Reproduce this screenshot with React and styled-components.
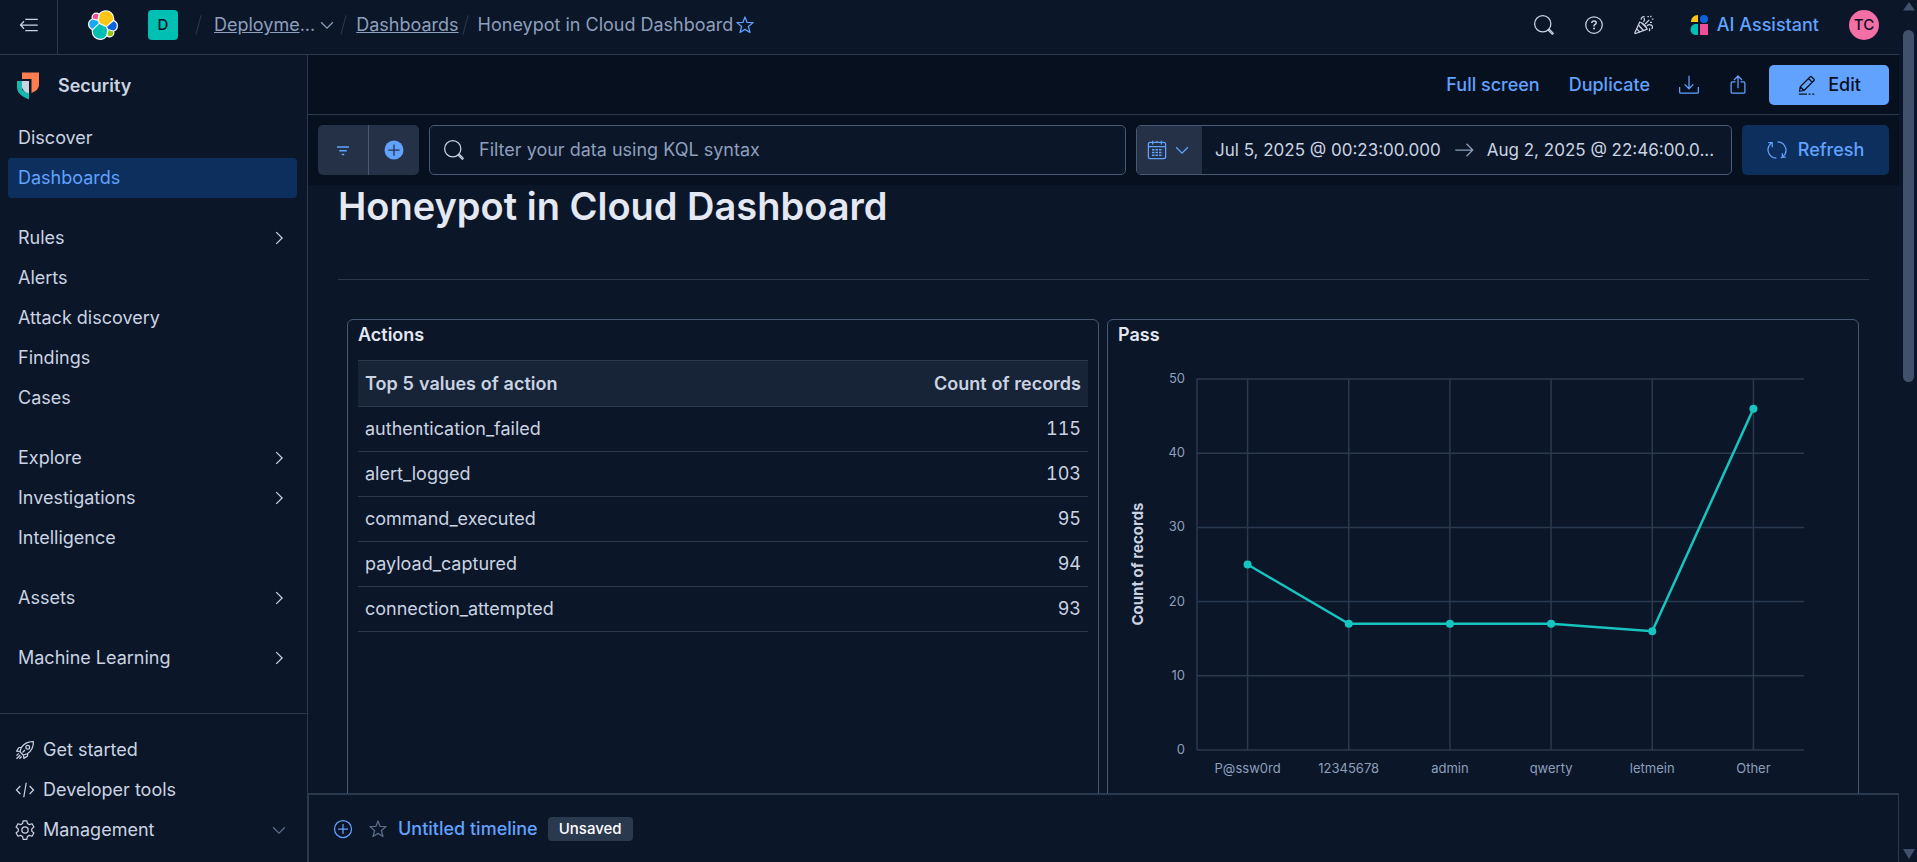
import React from "react";
import styled, { createGlobalStyle, ThemeProvider } from "styled-components";

const theme = {
  page: "#0b1628",
  sunken: "#07101f",
  raised: "#172336",
  control: "#243147",
  line: "#2b394f",
  outline: "#485975",
  text: "#cad3e2",
  title: "#e3e8f2",
  subdued: "#8e9fbc",
  faint: "#5a6d8c",
  primary: "#61a2ff",
  selected: "#0c2f5e",
  accent: "#16c5c0",
};

const GlobalStyle = createGlobalStyle`
  *, *::before, *::after { box-sizing: border-box; }
  html, body, #root { height: 100%; }
  body {
    margin: 0;
    background: ${theme.page};
    color: ${theme.text};
    font: 400 18px/24px Inter, "Liberation Sans", sans-serif;
  }
  button, input, select { font: inherit; color: inherit; }
  button { background: none; border: 0; padding: 0; cursor: pointer; }
  a { color: inherit; text-decoration: none; }
  ul, ol { list-style: none; margin: 0; padding: 0; }
  h1, h2 { margin: 0; }
  svg { display: block; flex: none; }
`;

/* ---------- icons ---------- */

const Glyph = ({ size = 20, children, ...rest }) => (
  <svg width={size} height={size} viewBox="0 0 16 16" fill="none" stroke="currentColor" strokeWidth="1" aria-hidden="true" {...rest}>
    {children}
  </svg>
);

const CollapseIcon = () => (
  <Glyph>
    <path d="M5 3.5h10M1.5 8H15M5 12.5h10M4 5 1.2 8 4 11" />
  </Glyph>
);
const ChevronDown = () => (
  <Glyph>
    <path d="m3.3 5.8 4.7 4.7 4.7-4.7" />
  </Glyph>
);
const ChevronRight = () => (
  <Glyph>
    <path d="m5.8 3.3 4.7 4.7-4.7 4.7" />
  </Glyph>
);
const StarIcon = () => (
  <Glyph>
    <path strokeLinejoin="round" d="m8 1.6 1.7 4.4 4.8.1-3.8 3.1 1.3 4.8L8 11.5 4 14l1.3-4.8-3.8-3.1 4.8-.1z" />
  </Glyph>
);
const SearchIcon = () => (
  <Glyph>
    <circle cx="7" cy="7" r="6.5" />
    <path d="m11.6 12.4.8-.8 2.9 2.9c.3.3-.5 1.1-.8.8z" />
  </Glyph>
);
const HelpIcon = () => (
  <Glyph>
    <circle cx="8" cy="8" r="6.6" />
    <path strokeWidth="1.2" d="M6.2 6.4c.1-1.1.8-1.7 1.8-1.7s1.8.6 1.8 1.5c0 1.3-1.8 1.3-1.8 2.6v.3" />
    <circle cx="8" cy="10.8" r=".8" fill="currentColor" stroke="none" />
  </Glyph>
);
const PartyIcon = () => (
  <Glyph>
    <path strokeLinejoin="round" d="M4.6 5.6c2.8.9 5 3 6 5.7L1.3 14.8c-.4.1-.7-.2-.6-.6z" />
    <path d="m3.7 8.2 4 4.4M2.4 11.3l2.3 2.5M6 6.3l4 4" />
    <path d="M7.6 5.5c.8-.9 1-2.200.4-3.200M5.600 3.700c.2-1.600 1.400-2.800 2.900-2.300M9 7.200l3.200-3.300M10.300 8.700c1-.9 2.300-1.200 3.500-.6 1.300.7 1.300 2.300.2 2.900M12.300 10.600c.5.800.4 1.700-.2 2.300" />
    <path d="M10.700 1.200h1.200M13.500.5v1.200M14.300 3.200h1.200M12.800 5.800h1.600" />
  </Glyph>
);
const DownloadIcon = () => (
  <Glyph>
    <path d="M8 .5v10M4.500 7.500 8 11l3.500-3.500M.5 9.500v4c0 .6.400 1 1 1h13c.6 0 1-.4 1-1v-4" />
  </Glyph>
);
const ShareIcon = () => (
  <Glyph>
    <path d="M8 10.500V1M4.800 4 8 .8 11.200 4M6 5.500H3.500c-.6 0-1 .4-1 1v7c0 .6.400 1 1 1h9c.6 0 1-.4 1-1v-7c0-.6-.4-1-1-1H10" />
  </Glyph>
);
const PencilIcon = () => (
  <Glyph>
    <path strokeLinejoin="round" d="m2.600 9.400 8-8c.3-.3.700-.3 1 0l2 2c.3.300.3.700 0 1l-8 8-3.600.600zM9.200 2.800l3 3M2.600 9.400l3 3M1.500 15.200H8M9.200 15.200h1.600M12.200 15.200h1.600" />
  </Glyph>
);
const FilterIcon = () => (
  <Glyph strokeWidth="1.200">
    <path d="M3.200 5.500h9.600M5 8.500h6M7 11.500h2" />
  </Glyph>
);
const AddFilledIcon = () => (
  <Glyph>
    <circle cx="8" cy="8" r="7.600" fill="currentColor" stroke="none" />
    <path stroke={theme.control} d="M8 3.500v9M3.500 8h9" />
  </Glyph>
);
const AddIcon = () => (
  <Glyph>
    <circle cx="8" cy="8" r="6.800" />
    <path d="M8 4v8M4 8h8" />
  </Glyph>
);
const CalendarIcon = () => (
  <Glyph>
    <rect x="1.100" y="1.900" width="13.800" height="13" rx="1.500" />
    <path d="M1 5.200h14M4.500.500v3M11.500.500v3M8 .500v1.500" />
    <path strokeWidth="1.200" strokeDasharray="2 .8" d="M4 7.800h8.500M4 10h8.500M4 12.200h8.500" />
  </Glyph>
);
const ArrowRightIcon = () => (
  <Glyph>
    <path d="M1 8h14M10 3l5 5-5 5" />
  </Glyph>
);
const RefreshIcon = () => (
  <Glyph>
    <path d="M8.500 1.500c6.500.300 9 8 4 12M11 14.300l1.700-.6h2.300M12.300 10.500v3.400M7.500 14.500C1 14.200-1.500 6.500 3.500 2.500M1 2.100h3.200v3.600" />
  </Glyph>
);
const RocketIcon = () => (
  <Glyph>
    <path strokeLinejoin="round" d="M14.700 1.300c-4-.2-7.300 1.300-9.700 4.800L4 9.500 6.500 12l3.400-1c3.500-2.400 5-5.700 4.800-9.700zM5.200 5.900 3.200 6 1.300 8.900l2.900.3M10.100 10.800 10 12.800 7.100 14.700l-.3-2.900" />
    <circle cx="10.200" cy="5.800" r="1.500" />
    <path d="M6 10l2-2M1.200 12.500l1.800-1.800M1.200 15l3-3M3.500 15l1.800-1.800" />
  </Glyph>
);
const CodeIcon = () => (
  <Glyph>
    <path d="M4.300 4.800 1.200 8l3.100 3.200M11.700 4.800 14.800 8l-3.100 3.200M9 2.200 7 13.800" />
  </Glyph>
);
const GearIcon = () => (
  <Glyph>
    <path strokeLinejoin="round" d="M6.500.6h3l.4 2.200 1.600.9 2.100-.7 1.500 2.600-1.700 1.500v1.800l1.700 1.500-1.500 2.600-2.100-.7-1.600.9-.4 2.200h-3l-.4-2.200-1.600-.9-2.100.7L.9 10.400l1.700-1.500V7.100L.9 5.600 2.400 3l2.100.7 1.600-.9z" />
    <circle cx="8" cy="8" r="2.500" />
  </Glyph>
);

const elasticShapes = [
  ["#FEC514", "M12.58 13.787l7.002 3.211 7.066-6.213a7.85 7.85 0 0 0 .152-1.557c0-4.287-3.464-7.767-7.732-7.767a7.707 7.707 0 0 0-6.366 3.36l-1.175 6.119z"],
  ["#00BFB3", "M5.333 21.214a7.89 7.89 0 0 0-.153 1.576c0 4.29 3.478 7.78 7.754 7.78a7.74 7.74 0 0 0 6.394-3.386l1.166-6.1-1.556-2.987-7.03-3.215z"],
  ["#F04E98", "M5.288 9.067l4.8 1.137L11.14 4.73a3.785 3.785 0 0 0-2.303-.782 3.81 3.81 0 0 0-3.8 3.815c0 .444.084.894.25 1.304z"],
  ["#1BA9F5", "M4.872 10.214a5.294 5.294 0 0 0-3.535 4.994 5.277 5.277 0 0 0 3.382 4.933l6.735-6.113-1.236-2.653z"],
  ["#93C90E", "M20.873 27.184a3.775 3.775 0 0 0 2.29.781 3.81 3.81 0 0 0 3.8-3.814c0-.463-.077-.91-.243-1.32l-4.796-1.126z"],
  ["#0B64DD", "M21.848 20.563l5.28 1.238a5.295 5.295 0 0 0 3.534-4.993 5.277 5.277 0 0 0-3.386-4.93l-6.906 6.068z"],
];
const ElasticLogo = () => (
  <svg width="30" height="30" viewBox="0 0 32 32" role="img" aria-label="Elastic">
    <g fill="#fff" stroke="#fff" strokeWidth="2.600" strokeLinejoin="round">
      {elasticShapes.map(([fill, d]) => <path key={fill} d={d} />)}
    </g>
    {elasticShapes.map(([fill, d]) => <path key={fill} fill={fill} d={d} />)}
  </svg>
);
const SecurityLogo = () => (
  <svg width="24" height="28" viewBox="0 0 24 28" aria-hidden="true">
    <path fill="#ff7e50" d="M6 .5h17v12c0 4-3 7-7.500 8.500V7H6z" />
    <path fill="#16b9ad" d="M1 9h5v9l7 3v6.500C5.500 24.500 1 20.500 1 15.500z" />
    <path fill="#cad3e2" d="M6 9h7v12.300C9.500 20.500 6 18 6 15z" />
  </svg>
);
const AssistantLogo = () => (
  <svg width="18" height="20" viewBox="0 0 18 20" aria-hidden="true">
    <path fill="#FEC514" d="M8 0v7H1c0-4 3-7 7-7z" />
    <circle cx="14" cy="4" r="4" fill="#0B64DD" />
    <path fill="#00BFB3" d="M8 9v11H6c-3.300 0-5.500-2.500-5.500-5.500S2.700 9 6 9z" />
    <path fill="#F04E98" d="M10 9h8v11h-8z" />
  </svg>
);

/* ---------- shell ---------- */

const Shell = styled.div`
  display: flex;
  height: 100vh;
  overflow: hidden;
`;
const Page = styled.div`
  flex: 1;
  min-width: 0;
  display: flex;
  flex-direction: column;
`;
const Workspace = styled.div`
  flex: 1;
  min-height: 0;
  display: flex;
`;

const Header = styled.header`
  display: flex;
  align-items: center;
  height: 55px;
  flex: none;
  padding-right: 20px;
  border-bottom: 1px solid ${(p) => p.theme.line};
`;
const CollapseButton = styled.button`
  display: flex;
  align-items: center;
  justify-content: center;
  align-self: stretch;
  width: 58px;
  padding-bottom: 4px;
  border-right: 1px solid ${(p) => p.theme.line};
`;
const LogoLink = styled.a`
  margin: 0 30px;
  padding-bottom: 4px;
`;
const Avatar = styled.button`
  display: grid;
  place-items: center;
  width: 30px;
  height: 30px;
  margin-bottom: 4px;
  border-radius: ${(p) => (p.$round ? "50%" : "4px")};
  background: ${(p) => p.$fill};
  color: #07101f;
  font-size: 15px;
  font-weight: 500;
`;
const Crumbs = styled.ol`
  display: flex;
  align-items: center;
  margin-left: 14px;
  padding-bottom: 4px;
  color: ${(p) => p.theme.subdued};
`;
const Crumb = styled.li`
  display: flex;
  align-items: center;
  gap: 2px;
  white-space: nowrap;

  &::before {
    content: "";
    width: 1px;
    height: 20px;
    margin: 0 ${(p) => (p.$first ? 13 : 10)}px 0 6px;
    background: ${(p) => p.theme.line};
    transform: rotate(15deg);
  }
  a {
    text-decoration: underline;
  }
  button {
    color: ${(p) => p.$starColor || "inherit"};
  }
`;
const HeaderActions = styled.div`
  display: flex;
  align-items: center;
  gap: 10px;
  margin-left: auto;
`;
const IconButton = styled.button`
  display: grid;
  place-items: center;
  width: ${(p) => p.$width || 20}px;
  height: 40px;
  padding-bottom: ${(p) => (p.$raised ? 4 : 0)}px;
  color: ${(p) => p.$color || "inherit"};
`;
const AssistantButton = styled.button`
  display: flex;
  align-items: center;
  gap: 9px;
  margin: 0 20px 0 16px;
  padding-bottom: 4px;
  color: ${(p) => p.theme.primary};
  font-weight: 500;
`;

/* ---------- side navigation ---------- */

const Sidebar = styled.nav`
  display: flex;
  flex-direction: column;
  flex: none;
  width: 308px;
  border-right: 1px solid ${(p) => p.theme.line};
`;
const Solution = styled.a`
  display: flex;
  align-items: center;
  gap: 18px;
  height: 63px;
  padding: 0 16px 2px;
  font-weight: 600;
`;
const NavGroups = styled.div`
  flex: 1;
  display: flex;
  flex-direction: column;
  gap: 20px;
  padding: 0 10px 0 8px;
`;
const NavLink = styled.a`
  display: flex;
  align-items: center;
  gap: 8px;
  height: 40px;
  padding: 0 8px 0 ${(p) => (p.$iconic ? 7 : 10)}px;
  border-radius: 4px;
  background: ${(p) => (p.$active ? p.theme.selected : "transparent")};
  color: ${(p) => (p.$active ? p.theme.primary : "inherit")};

  span {
    flex: 1;
  }
`;
const FooterNav = styled.ul`
  padding: 16px 10px 12px 8px;
  border-top: 1px solid ${(p) => p.theme.line};

  a > svg:last-child:not(:first-child) {
    color: ${(p) => p.theme.faint};
  }
`;

/* ---------- dashboard ---------- */

const Main = styled.main`
  flex: 1;
  min-width: 0;
  display: flex;
  flex-direction: column;
`;
const TopBar = styled.div`
  display: flex;
  align-items: center;
  justify-content: flex-end;
  gap: 21px;
  flex: none;
  height: 60px;
  padding: 0 10px;
  background: ${(p) => p.theme.sunken};
  border-bottom: 1px solid ${(p) => p.theme.line};
`;
const TopLinks = styled.div`
  display: flex;
  align-items: center;
  gap: 29px;
  color: ${(p) => p.theme.primary};
`;
const TextButton = styled.button`
  font-weight: 500;
`;
const SolidButton = styled.button`
  display: flex;
  align-items: center;
  justify-content: center;
  gap: 11px;
  width: ${(p) => p.$width}px;
  height: ${(p) => p.$height}px;
  border-radius: 5px;
  background: ${(p) => (p.$quiet ? p.theme.selected : p.theme.primary)};
  color: ${(p) => (p.$quiet ? p.theme.primary : p.theme.sunken)};
  font-weight: 500;
`;
const QueryBar = styled.div`
  display: flex;
  gap: 10px;
  flex: none;
  padding: 10px;
  background: ${(p) => p.theme.sunken};
`;
const FilterGroup = styled.div`
  display: flex;
  width: 101px;
  height: 50px;
  border-radius: 5px;
  background: ${(p) => p.theme.control};
  color: ${(p) => p.theme.primary};

  button {
    flex: 1;
    display: grid;
    place-items: center;
  }
  button + button {
    border-left: 1px solid ${(p) => p.theme.outline};
  }
`;
const QueryField = styled.label`
  flex: 1;
  display: flex;
  align-items: center;
  gap: 15px;
  height: 50px;
  padding: 0 14px;
  border: 1px solid ${(p) => p.theme.outline};
  border-radius: 5px;
  background: ${(p) => p.theme.page};

  input {
    flex: 1;
    min-width: 0;
    padding: 0;
    border: 0;
    outline: 0;
    background: transparent;
  }
  input::placeholder {
    color: ${(p) => p.theme.subdued};
    opacity: 1;
  }
`;
const DateRange = styled.div`
  display: flex;
  align-items: center;
  gap: 13px;
  width: 596px;
  height: 50px;
  border: 1px solid ${(p) => p.theme.outline};
  border-radius: 5px;
  background: ${(p) => p.theme.page};
  overflow: hidden;
  white-space: nowrap;
  font-size: 17px;

  > svg {
    color: ${(p) => p.theme.subdued};
  }
`;
const QuickSelect = styled.button`
  display: flex;
  align-items: center;
  justify-content: center;
  gap: 5px;
  flex: none;
  width: 65px;
  height: 48px;
  background: ${(p) => p.theme.control};
  color: ${(p) => p.theme.primary};
`;

const Canvas = styled.div`
  flex: 1;
  min-height: 0;
  overflow: hidden;
  margin-top: -2px;
  padding: 0 30px;
`;
const PageTitle = styled.h1`
  padding-bottom: 50px;
  border-bottom: 1px solid ${(p) => p.theme.line};
  color: ${(p) => p.theme.title};
  font-size: 38px;
  font-weight: 600;
  line-height: 46px;
`;
const PanelGrid = styled.div`
  display: grid;
  grid-template-columns: 1fr 1fr;
  gap: 8px;
  padding: 39px 10px 0 9px;
`;
const Panel = styled.section`
  min-width: 0;
  min-height: 500px;
  border: 1px solid ${(p) => p.theme.outline};
  border-radius: 6px;
`;
const PanelTitle = styled.h2`
  padding: 2px 10px;
  color: ${(p) => p.theme.title};
  font-size: 18px;
  font-weight: 600;
  line-height: 26px;
`;
const TableWrap = styled.div`
  padding: 10px 10px 0;
`;
const DataTable = styled.table`
  width: 100%;
  border-collapse: separate;
  border-spacing: 0;
  font-variant-numeric: tabular-nums;

  th, td {
    height: 45px;
    padding: 0 7px;
    text-align: left;
    border-bottom: 1px solid ${(p) => p.theme.line};
  }
  th {
    height: 47px;
    border-top: 1px solid ${(p) => p.theme.line};
    background: ${(p) => p.theme.raised};
    font-weight: 600;
  }
  th:last-child, td:last-child {
    text-align: right;
  }
`;
const ChartSvg = styled.svg`
  width: 100%;
  height: auto;
  font-size: 13px;
`;

const TimelineBar = styled.footer`
  display: flex;
  align-items: center;
  flex: none;
  gap: 15px;
  height: 69px;
  padding: 0 24px;
  border: solid ${(p) => p.theme.line};
  border-width: 2px 1px 0 1px;
`;
const TimelineLink = styled.a`
  color: ${(p) => p.theme.primary};
  font-weight: 500;
`;
const TimelineName = styled.div`
  display: flex;
  align-items: center;
  gap: 10px;
`;
const Badge = styled.span`
  padding: 0 11px;
  border-radius: 4px;
  background: ${(p) => p.theme.line};
  color: #fff;
  font-size: 15px;
  font-weight: 500;
`;

/* ---------- scrollbar ---------- */

const ScrollTrack = styled.div`
  display: flex;
  flex-direction: column;
  align-items: center;
  flex: none;
  width: 18px;
  padding: 2px 0 3px 1px;
  color: #41506b;
`;
const ScrollThumb = styled.div`
  width: 11px;
  height: 352px;
  margin: 19px 0 auto;
  border-radius: 6px;
  background: currentColor;
`;

/* ---------- data ---------- */

const navGroups = [
  [{ label: "Discover" }, { label: "Dashboards", active: true }],
  [{ label: "Rules", more: true }, { label: "Alerts" }, { label: "Attack discovery" }, { label: "Findings" }, { label: "Cases" }],
  [{ label: "Explore", more: true }, { label: "Investigations", more: true }, { label: "Intelligence" }],
  [{ label: "Assets", more: true }],
  [{ label: "Machine Learning", more: true }],
];
const actionRows = [
  ["authentication_failed", 115],
  ["alert_logged", 103],
  ["command_executed", 95],
  ["payload_captured", 94],
  ["connection_attempted", 93],
];
const passRows = [
  ["P@ssw0rd", 25],
  ["12345678", 17],
  ["admin", 17],
  ["qwerty", 17],
  ["letmein", 16],
  ["Other", 46],
];

const plot = { left: 89, right: 696, top: 29, bottom: 400 };
const band = (plot.right - plot.left) / passRows.length;
const xAt = (i) => plot.left + band * (i + 0.5);
const yAt = (v) => plot.bottom - ((plot.bottom - plot.top) * v) / 50;

const PassChart = () => (
  <ChartSvg viewBox="0 0 750 440" role="img" aria-label="Count of records by password">
    <g stroke={theme.line} strokeWidth="1.5">
      {[0, 10, 20, 30, 40, 50].map((v) => (
        <line key={v} x1={plot.left} x2={plot.right} y1={yAt(v)} y2={yAt(v)} />
      ))}
      <line x1={plot.left} x2={plot.left} y1={plot.top} y2={plot.bottom} />
      {passRows.map(([name], i) => (
        <line key={name} x1={xAt(i)} x2={xAt(i)} y1={plot.top} y2={plot.bottom} />
      ))}
    </g>
    <g fill={theme.subdued}>
      {[0, 10, 20, 30, 40, 50].map((v) => (
        <text key={v} x={plot.left - 12} y={yAt(v) + 4} textAnchor="end">{v}</text>
      ))}
      {passRows.map(([name], i) => (
        <text key={name} x={xAt(i)} y={plot.bottom + 23} textAnchor="middle">{name}</text>
      ))}
    </g>
    <text transform="translate(35 214) rotate(-90)" textAnchor="middle" fill={theme.text} fontSize="15" fontWeight="700">
      Count of records
    </text>
    <polyline
      points={passRows.map(([, v], i) => `${xAt(i)},${yAt(v)}`).join(" ")}
      fill="none"
      stroke={theme.accent}
      strokeWidth="2.500"
    />
    {passRows.map(([name, v], i) => (
      <circle key={name} cx={xAt(i)} cy={yAt(v)} r="4" fill={theme.accent} />
    ))}
  </ChartSvg>
);

export default function App() {
  return (
    <ThemeProvider theme={theme}>
      <GlobalStyle />
      <Shell>
        <Page>
          <Header>
            <CollapseButton aria-label="Collapse side navigation"><CollapseIcon /></CollapseButton>
            <LogoLink href="#home"><ElasticLogo /></LogoLink>
            <Avatar $fill="#00bfb3">D</Avatar>
            <Crumbs>
              <Crumb $first>
                <span><a href="#deployment">Deployme</a>...</span>
                <button aria-label="Switch deployment"><ChevronDown /></button>
              </Crumb>
              <Crumb><a href="#dashboards">Dashboards</a></Crumb>
              <Crumb $starColor={theme.primary}>
                <span>Honeypot in Cloud Dashboard</span>
                <button aria-label="Add to favorites"><StarIcon /></button>
              </Crumb>
            </Crumbs>
            <HeaderActions>
              <IconButton $width={40} $raised aria-label="Search"><SearchIcon /></IconButton>
              <IconButton $width={40} $raised aria-label="Help"><HelpIcon /></IconButton>
              <IconButton $width={40} $raised aria-label="What's new"><PartyIcon /></IconButton>
              <AssistantButton><AssistantLogo />AI Assistant</AssistantButton>
              <Avatar $round $fill="#f36fa6">TC</Avatar>
            </HeaderActions>
          </Header>

          <Workspace>
            <Sidebar>
              <Solution href="#security"><SecurityLogo />Security</Solution>
              <NavGroups>
                {navGroups.map((group) => (
                  <ul key={group[0].label}>
                    {group.map((item) => (
                      <li key={item.label}>
                        <NavLink href="#nav" $active={item.active}>
                          <span>{item.label}</span>
                          {item.more && <ChevronRight />}
                        </NavLink>
                      </li>
                    ))}
                  </ul>
                ))}
              </NavGroups>
              <FooterNav>
                <li><NavLink $iconic href="#start"><RocketIcon /><span>Get started</span></NavLink></li>
                <li><NavLink $iconic href="#dev"><CodeIcon /><span>Developer tools</span></NavLink></li>
                <li><NavLink $iconic href="#manage"><GearIcon /><span>Management</span><ChevronDown /></NavLink></li>
              </FooterNav>
            </Sidebar>

            <Main>
              <TopBar>
                <TopLinks>
                  <TextButton>Full screen</TextButton>
                  <TextButton>Duplicate</TextButton>
                  <IconButton aria-label="Export"><DownloadIcon /></IconButton>
                  <IconButton aria-label="Share"><ShareIcon /></IconButton>
                </TopLinks>
                <SolidButton $width={120} $height={40}><PencilIcon />Edit</SolidButton>
              </TopBar>
              <QueryBar>
                <FilterGroup>
                  <button aria-label="Filter menu"><FilterIcon /></button>
                  <button aria-label="Add filter"><AddFilledIcon /></button>
                </FilterGroup>
                <QueryField>
                  <SearchIcon />
                  <input type="text" aria-label="Query" placeholder="Filter your data using KQL syntax" />
                </QueryField>
                <DateRange>
                  <QuickSelect aria-label="Quick date select"><CalendarIcon /><ChevronDown /></QuickSelect>
                  <button>Jul 5, 2025 @ 00:23:00.000</button>
                  <ArrowRightIcon />
                  <button>Aug 2, 2025 @ 22:46:00.0...</button>
                </DateRange>
                <SolidButton $quiet $width={147} $height={50}><RefreshIcon />Refresh</SolidButton>
              </QueryBar>

              <Canvas>
                <PageTitle>Honeypot in Cloud Dashboard</PageTitle>
                <PanelGrid>
                  <Panel>
                    <PanelTitle>Actions</PanelTitle>
                    <TableWrap>
                      <DataTable>
                        <thead>
                          <tr><th scope="col">Top 5 values of action</th><th scope="col">Count of records</th></tr>
                        </thead>
                        <tbody>
                          {actionRows.map(([name, count]) => (
                            <tr key={name}><td>{name}</td><td>{count}</td></tr>
                          ))}
                        </tbody>
                      </DataTable>
                    </TableWrap>
                  </Panel>
                  <Panel>
                    <PanelTitle>Pass</PanelTitle>
                    <PassChart />
                  </Panel>
                </PanelGrid>
              </Canvas>

              <TimelineBar>
                <IconButton $color={theme.primary} aria-label="New timeline"><AddIcon /></IconButton>
                <TimelineName>
                  <IconButton $color={theme.faint} aria-label="Favorite timeline"><StarIcon /></IconButton>
                  <TimelineLink href="#timeline">Untitled timeline</TimelineLink>
                  <Badge>Unsaved</Badge>
                </TimelineName>
              </TimelineBar>
            </Main>
          </Workspace>
        </Page>
        <ScrollTrack aria-hidden="true">
          <svg width="12" height="9" viewBox="0 0 12 9" fill="currentColor"><path d="M6 0 12 8.500H0z" /></svg>
          <ScrollThumb />
          <svg width="12" height="10" viewBox="0 0 12 10" fill="currentColor"><path d="M6 10 0 0h12z" /></svg>
        </ScrollTrack>
      </Shell>
    </ThemeProvider>
  );
}
